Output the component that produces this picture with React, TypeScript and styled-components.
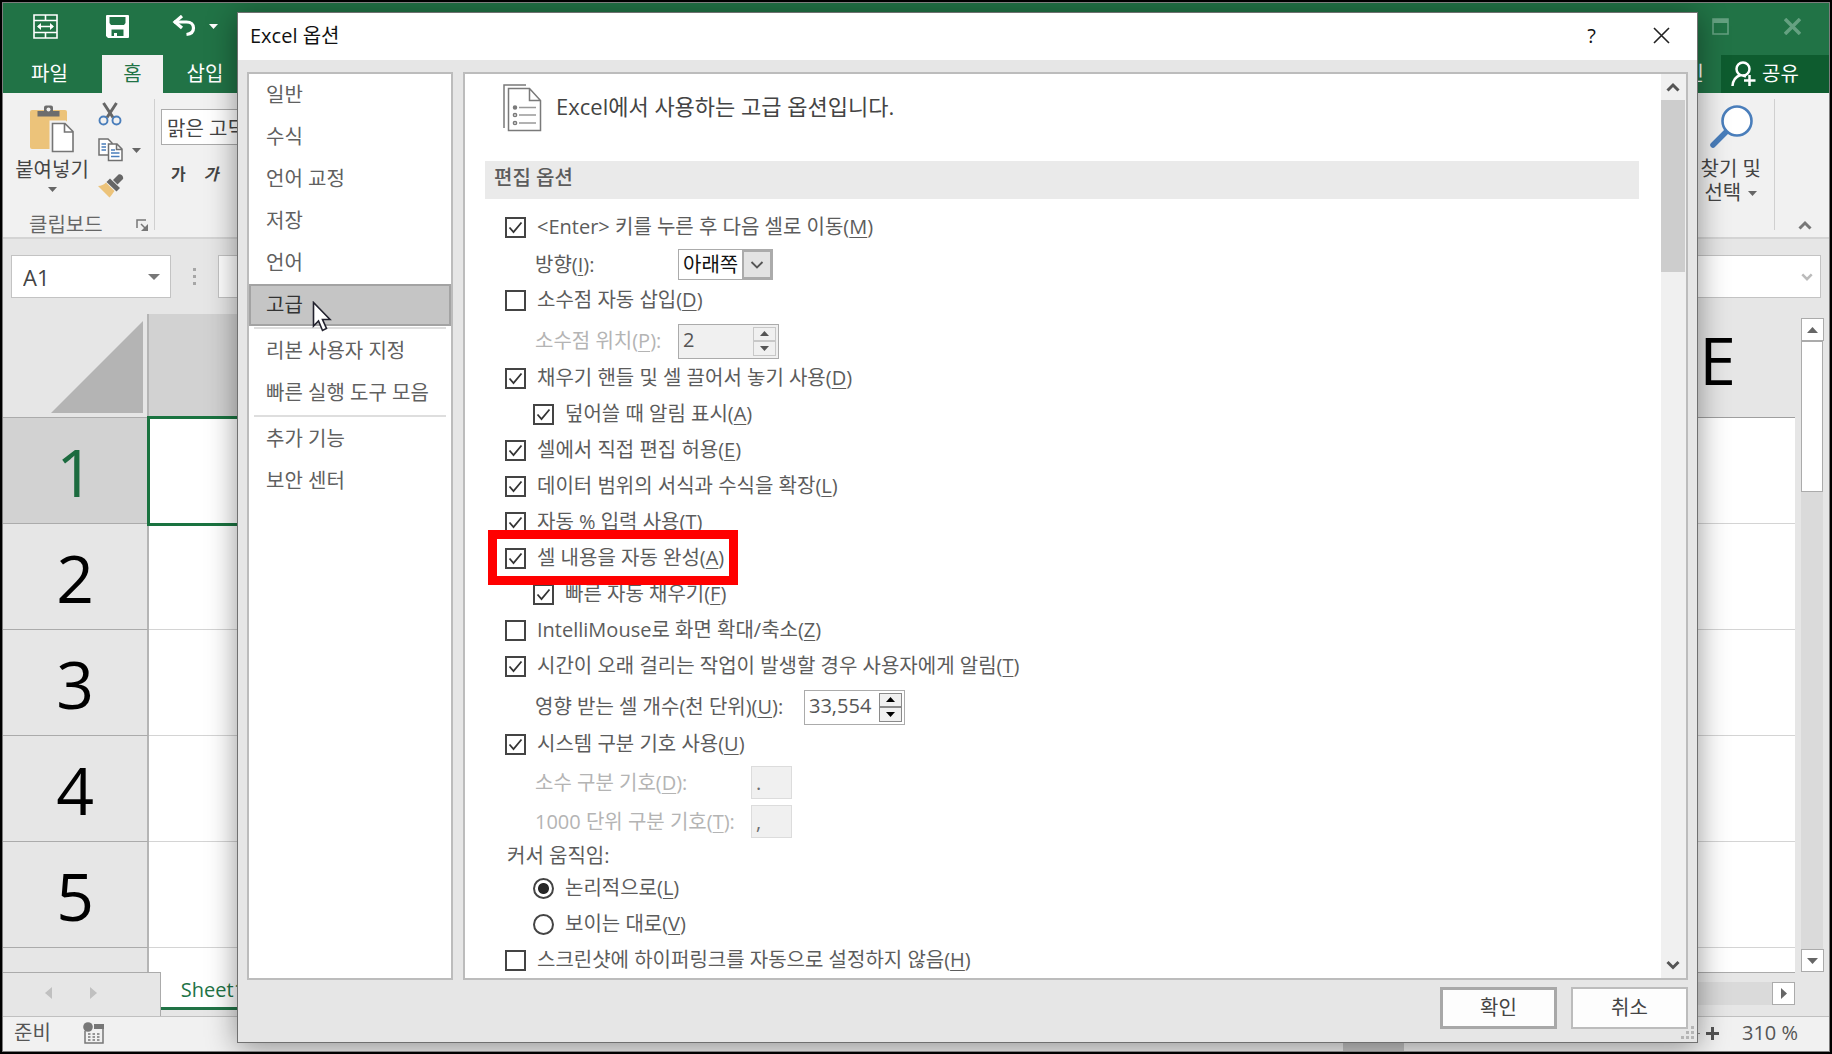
import React, { useState } from "react";
import styled, { createGlobalStyle, css } from "styled-components";

const GlobalStyle = createGlobalStyle`
  *, *::before, *::after { box-sizing: border-box; }
  html, body { margin: 0; }
  body, button, input, select {
    font-family: "Open Sans", "Noto Sans CJK KR", sans-serif;
    font-size: 20px;
    line-height: 24px;
  }
  button { padding: 0; border: 0; background: none; color: inherit; }
  svg { display: block; flex: none; }
`;

/* ---------- workbook window ---------- */

const Frame = styled.div`
  height: 100vh;
  min-height: 1000px;
  border: 2px solid #000;
  overflow: hidden;
`;

const Workbook = styled.div`
  position: relative;
  display: flex;
  flex-direction: column;
  height: 100%;
  border: 1px solid #7d7d7d;
  background: #e6e6e6;
  overflow: hidden;
`;

const TitleBar = styled.header`
  display: flex;
  align-items: center;
  flex: none;
  height: 52px;
  padding: 0 28px 6px 30px;
  background: #217346;
  color: #fff;
`;

const QuickTools = styled.div`
  display: flex;
  align-items: center;
  flex: 1;
`;

const IconButton = styled.button<{ $gap?: number }>`
  display: flex;
  align-items: center;
  justify-content: center;
  margin-right: ${(p) => p.$gap ?? 0}px;
`;

const TabStrip = styled.nav`
  display: flex;
  flex: none;
  height: 38px;
  background: #217346;
  color: #fff;
`;

const RibbonTab = styled.button<{ $width: number; $active?: boolean }>`
  width: ${(p) => p.$width}px;
  background: ${(p) => (p.$active ? "#f1f1f1" : "transparent")};
  color: ${(p) => (p.$active ? "#217346" : "#fff")};
`;

const FileTab = styled(RibbonTab)`
  padding-right: 6px;
`;

const SignIn = styled.button`
  margin-left: auto;
  margin-right: 17px;
`;

const Share = styled.button`
  display: flex;
  align-items: center;
  gap: 6px;
  width: 108px;
  padding-left: 10px;
  background: #0e5c2f;
`;

const Ribbon = styled.section`
  display: flex;
  flex: none;
  height: 146px;
  border-bottom: 2px solid #d4d4d4;
  background: #f1f1f1;
  color: #444;
`;

const ClipboardGroup = styled.div`
  display: grid;
  grid-template-columns: 84px 1fr;
  grid-template-rows: 107px 1fr;
  width: 152px;
  margin: 6px 0 7px;
  border-right: 1px solid #d0d0d0;
`;

const PasteButton = styled.button`
  display: flex;
  flex-direction: column;
  align-items: center;
  gap: 5px;
  padding: 6px 0 0 14px;
  white-space: nowrap;
`;

const ClipTools = styled.div`
  display: flex;
  flex-direction: column;
  gap: 12px;
  padding: 3px 0 0 11px;
`;

const ClipTool = styled.button`
  display: flex;
  align-items: center;
  gap: 9px;
`;

const GroupLabel = styled.div`
  display: flex;
  align-items: center;
  justify-content: space-between;
  grid-column: 1 / 3;
  padding: 7px 6px 0 26px;
  color: #666;
`;

const FontGroup = styled.div`
  width: 200px;
  padding: 16px 0 0 6px;
`;

const FontName = styled.input`
  display: block;
  width: 190px;
  height: 36px;
  padding: 0 5px;
  border: 1px solid #ababab;
  background: #fff;
  color: #444;
`;

const StyleButtons = styled.div`
  display: flex;
  gap: 18px;
  padding: 17px 0 0 10px;
`;

const StyleButton = styled.button<{ $italic?: boolean }>`
  font-size: 16px;
  font-weight: 700;
  font-style: ${(p) => (p.$italic ? "italic" : "normal")};
`;

const FindGroup = styled.div`
  margin: 6px 0 7px auto;
  padding-right: 13px;
  border-right: 1px solid #d0d0d0;
`;

const FindButton = styled.button`
  display: flex;
  flex-direction: column;
  align-items: center;
  padding-top: 6px;
  gap: 8px;
`;

const CaretLine = styled.span`
  display: flex;
  align-items: center;
  justify-content: center;
  gap: 7px;
`;

const CollapseArea = styled.div`
  display: flex;
  align-items: flex-end;
  justify-content: center;
  width: 54px;
  padding: 0 0 7px 6px;
`;

const FormulaBar = styled.div`
  display: flex;
  align-items: flex-start;
  flex: none;
  height: 75px;
  padding: 16px 8px 0;
`;

const NameBox = styled.label`
  display: flex;
  align-items: center;
  width: 160px;
  height: 43px;
  padding-right: 10px;
  border: 1px solid #c3c3c3;
  background: #fff;
`;

const NameInput = styled.input`
  flex: 1;
  min-width: 0;
  padding: 0 0 0 11px;
  border: 0;
  background: none;
  color: #444;
  font-size: 22px;
`;

const Dots = styled.div`
  display: flex;
  flex-direction: column;
  align-items: center;
  justify-content: center;
  gap: 4px;
  width: 47px;
  height: 43px;
`;

const Dot = styled.i`
  width: 3px;
  height: 3px;
  background: #a6a6a6;
`;

const FormulaBox = styled.div`
  display: flex;
  align-items: center;
  justify-content: flex-end;
  flex: 1;
  height: 43px;
  padding-right: 7px;
  border: 1px solid #c3c3c3;
  background: #fff;
`;

const SheetArea = styled.div`
  display: flex;
  flex: 1;
  min-height: 0;
`;

const SheetPane = styled.div`
  flex: 1;
  min-width: 0;
  overflow: hidden;
`;

const Sheet = styled.table`
  width: 100%;
  table-layout: fixed;
  border-collapse: separate;
  border-spacing: 0;
  font-size: 66px;
  line-height: 72px;
  color: #000;
`;

const Corner = styled.th`
  width: 146px;
  height: 104px;
  padding: 7px 4px 0 0;
  border-right: 2px solid #b5b5b5;
  border-bottom: 1px solid #ababab;
  vertical-align: top;
  svg { margin-left: auto; }
`;

const ColumnHead = styled.th<{ $selected?: boolean }>`
  width: 349px;
  padding: 0 0 14px;
  border-bottom: 1px solid #9f9f9f;
  background: ${(p) => (p.$selected ? "#d2d2d2" : "transparent")};
  font-weight: 400;
  text-align: left;
`;

const ColumnLetter = styled.span`
  display: block;
  width: 345px;
  text-align: center;
`;

const RowHead = styled.th<{ $selected?: boolean }>`
  height: 106px;
  padding: 0;
  border-right: 2px solid #b5b5b5;
  border-bottom: 1px solid #ababab;
  background: ${(p) => (p.$selected ? "#d2d2d2" : "transparent")};
  color: ${(p) => (p.$selected ? "#1c6b3f" : "#000")};
  font-weight: 400;
`;

const Cell = styled.td<{ $selected?: boolean }>`
  border-bottom: 1px solid #d4d4d4;
  background: #fff;
  ${(p) => p.$selected && css`outline: 3px solid #1a7340; outline-offset: -1px;`}
  &:last-child { border-right: 2px solid #ababab; }
`;

const VScroll = styled.div`
  display: flex;
  flex-direction: column;
  flex: none;
  width: 34px;
  padding: 4px 6px 0;
`;

const ScrollButton = styled.button`
  display: flex;
  align-items: center;
  justify-content: center;
  flex: none;
  width: 23px;
  height: 23px;
  border: 1px solid #ababab;
  background: #fff;
`;

const VTrack = styled.div`
  flex: 1;
  background: #dadada;
`;

const VThumb = styled.div`
  height: 151px;
  border: 1px solid #ababab;
  background: #fff;
`;

const SheetTabs = styled.div`
  display: flex;
  flex: none;
  height: 44px;
  margin-right: 34px;
`;

const TabArrows = styled.div`
  display: flex;
  align-items: center;
  gap: 38px;
  width: 158px;
  padding: 0 0 4px 42px;
  border-top: 1px solid #ababab;
  border-right: 1px solid #ababab;
`;

const SheetTab = styled.button`
  width: 104px;
  height: 38px;
  border-bottom: 3px solid #217346;
  background: #fff;
  color: #217346;
`;

const HScroll = styled.div`
  display: flex;
  flex: 1;
  padding-top: 9px;
  border-top: 1px solid #ababab;
`;

const HTrack = styled.div`
  flex: 1;
  height: 23px;
  background: #dadada;
`;

const StatusBar = styled.footer`
  display: flex;
  align-items: center;
  flex: none;
  height: 35px;
  padding: 0 31px 2px 11px;
  border-top: 1px solid #c0c0c0;
  background: #f1f1f1;
  color: #555;
`;

const StatusIcon = styled.span`
  margin-left: 32px;
`;

const ActiveView = styled.span`
  align-self: stretch;
  width: 61px;
  margin: 0 0 -2px auto;
  background: #c6c6c6;
`;

const ZoomLine = styled.span`
  width: 278px;
  height: 1px;
  margin: 0 6px 0 18px;
  background: #8a8a8a;
`;

const ZoomValue = styled.span`
  margin-left: 23px;
`;

/* ---------- options dialog ---------- */

const Dialog = styled.section`
  position: absolute;
  inset: 9px 131px 8px 234px;
  display: flex;
  flex-direction: column;
  border: 1px solid #707070;
  background: #e6e6e6;
  box-shadow: 0 4px 28px rgba(0, 0, 0, 0.42);
`;

const DialogTitle = styled.header`
  display: flex;
  align-items: center;
  flex: none;
  height: 47px;
  padding: 0 27px 2px 12px;
  background: #fff;
  color: #111;
`;

const DialogName = styled.h1`
  flex: 1;
  margin: 0;
  font-size: 20px;
  font-weight: 400;
`;

const DialogBody = styled.div`
  display: flex;
  flex: 1;
  min-height: 0;
  gap: 10px;
  padding: 12px 9px 0;
`;

const Categories = styled.nav`
  flex: none;
  width: 206px;
  border: 2px solid #bcbcbc;
  background: #fff;
`;

const Category = styled.button<{ $selected?: boolean }>`
  display: block;
  width: 100%;
  height: 42px;
  padding: 0 0 0 17px;
  background: ${(p) => (p.$selected ? "#c5c5c5" : "transparent")};
  box-shadow: ${(p) => (p.$selected ? "inset 0 0 0 2px #a3a3a3" : "none")};
  color: ${(p) => (p.$selected ? "#333" : "#606060")};
  text-align: left;
  white-space: nowrap;
`;

const Divider = styled.hr`
  height: 2px;
  margin: 1px 5px;
  border: 0;
  background: #dedede;
`;

const Page = styled.div`
  display: flex;
  flex: 1;
  min-width: 0;
  border: 2px solid #bcbcbc;
  background: #fff;
`;

const PageContent = styled.div`
  flex: 1;
  min-width: 0;
  padding: 0 22px 0 20px;
  overflow: hidden;
  color: #5c5c5c;
`;

const Intro = styled.div`
  display: flex;
  align-items: center;
  gap: 14px;
  height: 67px;
  margin-bottom: 20px;
  padding-left: 18px;
  color: #444;
  font-size: 22px;
`;

const IntroText = styled.span`
  padding-bottom: 4px;
`;

const SectionTitle = styled.h2`
  height: 38px;
  margin: 0 0 10px;
  padding-left: 9px;
  background: #eaeaea;
  font-size: 20px;
  font-weight: 500;
  line-height: 34px;
`;

const Options = styled.div`
  padding-left: 20px;
`;

const OptionLine = styled.div<{ $indent?: boolean }>`
  position: relative;
  display: flex;
  align-items: center;
  height: 36px;
  padding-left: ${(p) => (p.$indent ? 28 : 0)}px;
`;

const OptionLabel = styled.label`
  display: flex;
  align-items: center;
  gap: 11px;
  white-space: nowrap;
`;

const Tick = styled.input`
  appearance: none;
  flex: none;
  width: 21px;
  height: 21px;
  margin: 0;
  border: 2px solid #444;
  background: #fff;
  &[type="radio"] { border-radius: 50%; }
  &[type="checkbox"]:checked {
    background: url("data:image/svg+xml,%3Csvg xmlns='http://www.w3.org/2000/svg' viewBox='0 0 17 17'%3E%3Cpath d='M2.5 8.5l4 4.5 8-9.500' fill='none' stroke='%23333' stroke-width='1.8'/%3E%3C/svg%3E") center / 17px 17px;
  }
  &[type="radio"]:checked {
    background: radial-gradient(circle, #262626 5px, #fff 6px);
  }
`;

const Mnemonic = styled.u`
  text-decoration-thickness: 1px;
  text-underline-offset: 3px;
`;

const FieldLine = styled.div<{ $height: number; $top?: number }>`
  display: flex;
  align-items: center;
  height: ${(p) => p.$height}px;
  padding: ${(p) => p.$top ?? 0}px 0 0 30px;
`;

const FieldLabel = styled.label<{ $width: number; $disabled?: boolean }>`
  width: ${(p) => p.$width}px;
  color: ${(p) => (p.$disabled ? "#b4b4b4" : "inherit")};
  white-space: nowrap;
`;

const SelectBox = styled.div`
  display: grid;
  width: 95px;
  height: 31px;
  border: 1px solid #ababab;
`;

const Select = styled.select`
  appearance: none;
  grid-area: 1 / 1;
  padding: 0 0 0 4px;
  border: 0;
  background: #fff;
  color: #111;
`;

const SelectArrow = styled.span`
  display: flex;
  align-items: center;
  justify-content: center;
  grid-area: 1 / 1;
  justify-self: end;
  width: 30px;
  border: 2px solid #ababab;
  background: #e3e3e3;
  pointer-events: none;
`;

const Spinner = styled.div<{ $disabled?: boolean }>`
  display: flex;
  width: 101px;
  height: 35px;
  padding: 2px;
  border: 1px solid #ababab;
  background: ${(p) => (p.$disabled ? "#f0f0f0" : "#fff")};
  color: ${(p) => (p.$disabled ? "#c8c8c8" : "#8a8a8a")};
`;

const SpinnerInput = styled.input`
  flex: 1;
  min-width: 0;
  padding: 0 0 3px 2px;
  border: 0;
  background: none;
  color: #555;
`;

const SpinnerButtons = styled.div`
  display: grid;
  grid-template-rows: 1fr 1fr;
  width: 23px;
`;

const SpinnerButton = styled.button`
  display: flex;
  align-items: center;
  justify-content: center;
  border: 1px solid currentColor;
  background: #f0f0f0;
`;

const SmallInput = styled.input`
  width: 41px;
  height: 33px;
  padding: 0 4px;
  border: 1px solid #dcdcdc;
  background: #f0f0f0;
  color: #6d6d6d;
`;

const Caption = styled.div`
  height: 30px;
  padding-left: 2px;
  line-height: 32px;
`;

const Highlight = styled.span`
  position: absolute;
  left: -17px;
  top: -10px;
  width: 250px;
  height: 55px;
  border: 9px solid #f00;
  z-index: 1;
  pointer-events: none;
`;

const PageScroll = styled.div`
  display: flex;
  flex-direction: column;
  flex: none;
  width: 25px;
  padding-right: 1px;
  background: #f0f0f0;
`;

const PageScrollButton = styled.button`
  display: flex;
  align-items: center;
  justify-content: center;
  height: 26px;
`;

const PageTrack = styled.div`
  flex: 1;
`;

const PageThumb = styled.div`
  height: 172px;
  background: #cdcdcd;
`;

const DialogFooter = styled.footer`
  display: flex;
  flex: none;
  justify-content: flex-end;
  gap: 14px;
  height: 62px;
  padding: 7px 9px 13px;
`;

const DialogButton = styled.button<{ $primary?: boolean }>`
  width: 117px;
  border: ${(p) => (p.$primary ? "3px solid #a8a8a8" : "2px solid #bcbcbc")};
  background: #fdfdfd;
  color: #444;
`;

const Grip = styled.div`
  position: absolute;
  right: 3px;
  bottom: 3px;
`;

const Pointer = styled.div`
  position: absolute;
  left: 74px;
  top: 288px;
  pointer-events: none;
`;

/* ---------- drawings ---------- */

const Triangle = ({ dir, w = 11, h = 6, color = "#666" }: { dir: "up" | "down" | "left" | "right"; w?: number; h?: number; color?: string }) => {
  const shape = {
    up: `0,${h} ${w},${h} ${w / 2},0`,
    down: `0,0 ${w},0 ${w / 2},${h}`,
    left: `${w},0 ${w},${h} 0,${h / 2}`,
    right: `0,0 ${w},${h / 2} 0,${h}`,
  }[dir];
  return (
    <svg width={w} height={h}>
      <polygon points={shape} fill={color} />
    </svg>
  );
};

const Chevron = ({ dir, color = "#555", w = 14, thick = 3 }: { dir: "up" | "down"; color?: string; w?: number; thick?: number }) => (
  <svg width={w} height={10} viewBox="0 0 14 10" fill="none" stroke={color} strokeWidth={thick}>
    <path d={dir === "up" ? "M1.500 8.500L7 3l5.500 5.500" : "M1.500 2L7 7.500 12.500 2"} />
  </svg>
);

const MergeIcon = () => (
  <svg width="25" height="25" viewBox="0 0 25 25" fill="none" stroke="#fff" strokeWidth="1.600">
    <path d="M1 1h23v23H1zM1 6.500h23M1 18.500h23M12.500 1v5.500M12.500 18.500V24M5 12.500h15" />
    <path d="M8 9l-4 3.500L8 16zM17 9l4 3.500-4 3.500z" fill="#fff" stroke="none" />
  </svg>
);

const SaveIcon = () => (
  <svg width="23" height="23" viewBox="0 0 23 23">
    <path fill="#fff" fillRule="evenodd" d="M1 0h21a1 1 0 011 1v21a1 1 0 01-1 1H2l-2-2V1a1 1 0 011-1zM3.500 2v6l1.500 2h13l1.500-2V2zM5.500 14.500V21H8v-3h3v3h6.500v-6.500z" />
  </svg>
);

const UndoIcon = () => (
  <svg width="24" height="22" viewBox="0 0 24 22" fill="none" stroke="#fff" strokeWidth="3.200">
    <path d="M2 7h12.500c4.500 0 7 2.500 7 6s-2.500 6-7 6.500" />
    <path d="M10 1L3 7l7 6" />
  </svg>
);

const PasteIcon = () => (
  <svg width="46" height="48" viewBox="0 0 46 48">
    <rect x="1" y="5" width="37" height="39" rx="2" fill="#ecc37a" />
    <path d="M8.500 6H15V2.500a2 2 0 012-2h5a2 2 0 012 2V6h6.500v5.500h-22z" fill="#6d6d6d" />
    <circle cx="19.500" cy="4.500" r="2" fill="#f1f1f1" />
    <path d="M22.500 17.500H36l8 8v21H22.500z" fill="#fff" stroke="#f1f1f1" strokeWidth="4" />
    <path d="M23.500 18.500H36l8 8v20H23.500zM35.500 18.500v8.500H44" fill="#fff" stroke="#757575" strokeWidth="1.600" />
  </svg>
);

const CutIcon = () => (
  <svg width="24" height="24" viewBox="0 0 24 24" fill="none">
    <path d="M5.500 1L15 15.500M18.500 1L9 15.500" stroke="#666" strokeWidth="3" />
    <circle cx="5.500" cy="18.500" r="4" stroke="#4a7ebb" strokeWidth="1.900" />
    <circle cx="18.500" cy="18.500" r="4" stroke="#4a7ebb" strokeWidth="1.900" />
  </svg>
);

const CopyIcon = () => (
  <svg width="25" height="24" viewBox="0 0 25 24" fill="#fff" stroke="#707070" strokeWidth="1.500">
    <path d="M1 1h9l4 4v12H1z" />
    <path d="M3.500 6H8M3.500 9H8M3.500 12H8" stroke="#4a7ebb" />
    <path d="M10.500 6H19l5 5v11.500H10.500zM18.500 6v5.500H24" />
    <path d="M13 12h4M13 15h8.500M13 18.500h8.500" stroke="#4a7ebb" />
  </svg>
);

const BrushIcon = () => (
  <svg width="26" height="24" viewBox="0 0 26 24">
    <path d="M0 12c3 0 6-1.500 8-3.500l8.500 8.500c-1.500 2-3 4.500-5 6.500z" fill="#ecc37a" />
    <path d="M8.500 8l3.500-3.500 10 9.500-3.500 3.500z" fill="#666" />
    <path d="M15 6l5.500-5.500c2-1 5.500 1.500 4.500 4.500L19.500 10.500z" fill="#666" />
  </svg>
);

const LauncherIcon = () => (
  <svg width="12" height="12" viewBox="0 0 12 12" fill="none" stroke="#777" strokeWidth="1.500">
    <path d="M1 9V1h9M5 5l4 4" />
    <path d="M12 5v7H5z" fill="#777" stroke="none" />
  </svg>
);

const PersonIcon = () => (
  <svg width="25" height="26" viewBox="0 0 25 26" fill="none" stroke="#fff" strokeWidth="2.500">
    <circle cx="12" cy="8" r="6.500" />
    <path d="M1.500 25c.5-6 3.500-9.500 8-11M12 14.500l3 1M18.500 14v11M13 19.500h11.500" />
  </svg>
);

const FindIcon = () => (
  <svg width="44" height="44" viewBox="0 0 44 44">
    <path d="M4 40l15-15" stroke="#4a7ebb" strokeWidth="5.500" strokeLinecap="round" />
    <circle cx="28" cy="16" r="14.500" fill="#fff" stroke="#4a7ebb" strokeWidth="2.600" />
  </svg>
);

const MacroIcon = () => (
  <svg width="22" height="22" viewBox="0 0 22 22">
    <path d="M2 9v12h18V5" fill="none" stroke="#777" strokeWidth="1.500" />
    <path d="M11 2h10v5H11z" fill="#777" />
    <circle cx="5" cy="5" r="4.800" fill="#777" />
    <path d="M5 12h13M5 15h13M5 18h13" stroke="#777" strokeWidth="1.600" strokeDasharray="2.500 2" />
  </svg>
);

const OptionsIcon = () => (
  <svg width="39" height="48" viewBox="0 0 39 48" fill="none" stroke="#7a7a7a" strokeWidth="1.500">
    <path d="M1 44V1h22" />
    <path d="M5.500 4.500h21l11 12v30h-32zM26.500 4.500v12h11" />
    <circle cx="12" cy="23.500" r="1.500" fill="#7a7a7a" />
    <circle cx="12" cy="31" r="1.600" />
    <circle cx="12" cy="39" r="1.600" />
    <path d="M16 23.500h17M16 31h17M16 39h17" stroke="#999" />
  </svg>
);

const CloseIcon = ({ color, thick }: { color: string; thick: number }) => (
  <svg width="17" height="17" viewBox="0 0 17 17" stroke={color} strokeWidth={thick}>
    <path d="M1 1l15 15M16 1L1 16" />
  </svg>
);

const MaximizeIcon = () => (
  <svg width="17" height="17" viewBox="0 0 17 17" fill="none" stroke="#65a181" strokeWidth="1.600">
    <path d="M1 1h15v15H1z" />
    <path d="M1 3h15" strokeWidth="4" />
  </svg>
);

/* ---------- pieces ---------- */

type CheckProps = { text: string; letter: string; on?: boolean; indent?: boolean; marked?: boolean };

const CheckOption = ({ text, letter, on, indent, marked }: CheckProps) => (
  <OptionLine $indent={indent}>
    <OptionLabel>
      <Tick type="checkbox" defaultChecked={on} />
      <span>
        {text}(<Mnemonic>{letter}</Mnemonic>)
      </span>
    </OptionLabel>
    {marked && <Highlight />}
  </OptionLine>
);

const NumberSpinner = ({ id, value, disabled }: { id: string; value: string; disabled?: boolean }) => (
  <Spinner $disabled={disabled}>
    <SpinnerInput id={id} defaultValue={value} disabled={disabled} />
    <SpinnerButtons>
      <SpinnerButton aria-label="▲" disabled={disabled}>
        <Triangle dir="up" w={9} h={5} color={disabled ? "#555" : "#000"} />
      </SpinnerButton>
      <SpinnerButton aria-label="▼" disabled={disabled}>
        <Triangle dir="down" w={9} h={5} color={disabled ? "#555" : "#000"} />
      </SpinnerButton>
    </SpinnerButtons>
  </Spinner>
);

const categoryGroups = [
  ["일반", "수식", "언어 교정", "저장", "언어", "고급"],
  ["리본 사용자 지정", "빠른 실행 도구 모음"],
  ["추가 기능", "보안 센터"],
];

const editingOptions: CheckProps[] = [
  { text: "채우기 핸들 및 셀 끌어서 놓기 사용", letter: "D", on: true },
  { text: "덮어쓸 때 알림 표시", letter: "A", on: true, indent: true },
  { text: "셀에서 직접 편집 허용", letter: "E", on: true },
  { text: "데이터 범위의 서식과 수식을 확장", letter: "L", on: true },
  { text: "자동 % 입력 사용", letter: "T", on: true },
  { text: "셀 내용을 자동 완성", letter: "A", on: true, marked: true },
  { text: "빠른 자동 채우기", letter: "F", on: true, indent: true },
  { text: "IntelliMouse로 화면 확대/축소", letter: "Z" },
  { text: "시간이 오래 걸리는 작업이 발생할 경우 사용자에게 알림", letter: "T", on: true },
];

const OptionsDialog = () => {
  const [category, setCategory] = useState("고급");
  return (
    <Dialog role="dialog" aria-labelledby="dialog-name">
      <DialogTitle>
        <DialogName id="dialog-name">Excel 옵션</DialogName>
        <IconButton $gap={57}>?</IconButton>
        <IconButton>
          <CloseIcon color="#222" thick={1.6} />
        </IconButton>
      </DialogTitle>
      <DialogBody>
        <Categories>
          {categoryGroups.map((group, index) => (
            <React.Fragment key={index}>
              {index > 0 && <Divider />}
              {group.map((name) => (
                <Category key={name} $selected={name === category} onClick={() => setCategory(name)}>
                  {name}
                </Category>
              ))}
            </React.Fragment>
          ))}
        </Categories>
        <Page>
          <PageContent>
            <Intro>
              <OptionsIcon />
              <IntroText>Excel에서 사용하는 고급 옵션입니다.</IntroText>
            </Intro>
            <SectionTitle>편집 옵션</SectionTitle>
            <Options>
              <CheckOption text="<Enter> 키를 누른 후 다음 셀로 이동" letter="M" on />
              <FieldLine $height={37} $top={2}>
                <FieldLabel htmlFor="direction" $width={143}>
                  방향(<Mnemonic>I</Mnemonic>):
                </FieldLabel>
                <SelectBox>
                  <Select id="direction">
                    <option>아래쪽</option>
                  </Select>
                  <SelectArrow>
                    <Chevron dir="down" w={14} thick={1.8} />
                  </SelectArrow>
                </SelectBox>
              </FieldLine>
              <CheckOption text="소수점 자동 삽입" letter="D" />
              <FieldLine $height={42} $top={4}>
                <FieldLabel htmlFor="places" $width={143} $disabled>
                  소수점 위치(<Mnemonic>P</Mnemonic>):
                </FieldLabel>
                <NumberSpinner id="places" value="2" disabled />
              </FieldLine>
              {editingOptions.map((option) => (
                <CheckOption key={option.text} {...option} />
              ))}
              <FieldLine $height={42} $top={4}>
                <FieldLabel htmlFor="cells" $width={269}>
                  영향 받는 셀 개수(천 단위)(<Mnemonic>U</Mnemonic>):
                </FieldLabel>
                <NumberSpinner id="cells" value="33,554" />
              </FieldLine>
              <CheckOption text="시스템 구분 기호 사용" letter="U" on />
              <FieldLine $height={39} $top={2}>
                <FieldLabel htmlFor="decimal" $width={216} $disabled>
                  소수 구분 기호(<Mnemonic>D</Mnemonic>):
                </FieldLabel>
                <SmallInput id="decimal" defaultValue="." disabled />
              </FieldLine>
              <FieldLine $height={39} $top={2}>
                <FieldLabel htmlFor="thousands" $width={216} $disabled>
                  1000 단위 구분 기호(<Mnemonic>T</Mnemonic>):
                </FieldLabel>
                <SmallInput id="thousands" defaultValue="," disabled />
              </FieldLine>
              <Caption>커서 움직임:</Caption>
              <OptionLine $indent>
                <OptionLabel>
                  <Tick type="radio" name="cursor" defaultChecked />
                  <span>논리적으로(<Mnemonic>L</Mnemonic>)</span>
                </OptionLabel>
              </OptionLine>
              <OptionLine $indent>
                <OptionLabel>
                  <Tick type="radio" name="cursor" />
                  <span>보이는 대로(<Mnemonic>V</Mnemonic>)</span>
                </OptionLabel>
              </OptionLine>
              <CheckOption text="스크린샷에 하이퍼링크를 자동으로 설정하지 않음" letter="H" />
            </Options>
          </PageContent>
          <PageScroll>
            <PageScrollButton>
              <Chevron dir="up" />
            </PageScrollButton>
            <PageTrack>
              <PageThumb />
            </PageTrack>
            <PageScrollButton>
              <Chevron dir="down" />
            </PageScrollButton>
          </PageScroll>
        </Page>
      </DialogBody>
      <DialogFooter>
        <DialogButton $primary>확인</DialogButton>
        <DialogButton>취소</DialogButton>
      </DialogFooter>
      <Grip>
        <svg width="13" height="13" fill="#b5b5b5">
          <path d="M10 0h3v3h-3zM5 5h3v3H5zM10 5h3v3h-3zM0 10h3v3H0zM5 10h3v3H5zM10 10h3v3h-3z" />
        </svg>
      </Grip>
      <Pointer>
        <svg width="20" height="31" viewBox="0 0 20 31">
          <path d="M1.500 1.500v23.500l5-5 4 9.500 4-2-4-9h7.500z" fill="#fff" stroke="#22222e" strokeWidth="1.600" />
        </svg>
      </Pointer>
    </Dialog>
  );
};

export default function App() {
  return (
    <Frame>
      <GlobalStyle />
      <Workbook>
        <TitleBar>
          <QuickTools>
            <IconButton $gap={48}><MergeIcon /></IconButton>
            <IconButton $gap={43}><SaveIcon /></IconButton>
            <IconButton $gap={13}><UndoIcon /></IconButton>
            <IconButton><Triangle dir="down" w={9} h={5} color="#fff" /></IconButton>
          </QuickTools>
          <IconButton $gap={55}><MaximizeIcon /></IconButton>
          <IconButton><CloseIcon color="#65a181" thick={3.5} /></IconButton>
        </TitleBar>
        <TabStrip>
          <FileTab $width={99}>파일</FileTab>
          <RibbonTab $width={61} $active>홈</RibbonTab>
          <RibbonTab $width={84}>삽입</RibbonTab>
          <SignIn>로그인</SignIn>
          <Share><PersonIcon />공유</Share>
        </TabStrip>
        <Ribbon>
          <ClipboardGroup>
            <PasteButton>
              <PasteIcon />
              붙여넣기
              <Triangle dir="down" w={9} h={5} />
            </PasteButton>
            <ClipTools>
              <ClipTool><CutIcon /></ClipTool>
              <ClipTool><CopyIcon /><Triangle dir="down" w={9} h={5} /></ClipTool>
              <ClipTool><BrushIcon /></ClipTool>
            </ClipTools>
            <GroupLabel>클립보드<LauncherIcon /></GroupLabel>
          </ClipboardGroup>
          <FontGroup>
            <FontName defaultValue="맑은 고딕" />
            <StyleButtons>
              <StyleButton>가</StyleButton>
              <StyleButton $italic>가</StyleButton>
            </StyleButtons>
          </FontGroup>
          <FindGroup>
            <FindButton>
              <FindIcon />
              <span>
                찾기 및
                <CaretLine>선택<Triangle dir="down" w={9} h={5} /></CaretLine>
              </span>
            </FindButton>
          </FindGroup>
          <CollapseArea>
            <IconButton><Chevron dir="up" color="#777" /></IconButton>
          </CollapseArea>
        </Ribbon>
        <FormulaBar>
          <NameBox>
            <NameInput defaultValue="A1" />
            <Triangle dir="down" w={12} h={6} color="#777" />
          </NameBox>
          <Dots><Dot /><Dot /><Dot /></Dots>
          <FormulaBox><Chevron dir="down" color="#bbb" w={12} /></FormulaBox>
        </FormulaBar>
        <SheetArea>
          <SheetPane>
            <Sheet>
              <thead>
                <tr>
                  <Corner>
                    <svg width="92" height="92"><polygon points="92,0 92,92 0,92" fill="#b4b4b4" /></svg>
                  </Corner>
                  <ColumnHead $selected />
                  <ColumnHead />
                  <ColumnHead />
                  <ColumnHead />
                  <ColumnHead><ColumnLetter>E</ColumnLetter></ColumnHead>
                </tr>
              </thead>
              <tbody>
                {["1", "2", "3", "4", "5", ""].map((row, index) => (
                  <tr key={index}>
                    <RowHead $selected={index === 0}>{row}</RowHead>
                    <Cell $selected={index === 0} />
                    <Cell />
                    <Cell />
                    <Cell />
                    <Cell />
                  </tr>
                ))}
              </tbody>
            </Sheet>
          </SheetPane>
          <VScroll>
            <ScrollButton><Triangle dir="up" /></ScrollButton>
            <VTrack><VThumb /></VTrack>
            <ScrollButton><Triangle dir="down" /></ScrollButton>
          </VScroll>
        </SheetArea>
        <SheetTabs>
          <TabArrows>
            <IconButton><Triangle dir="left" w={7} h={12} color="#c0c0c0" /></IconButton>
            <IconButton><Triangle dir="right" w={7} h={12} color="#c0c0c0" /></IconButton>
          </TabArrows>
          <SheetTab>Sheet1</SheetTab>
          <HScroll>
            <HTrack />
            <ScrollButton><Triangle dir="right" w={6} h={11} /></ScrollButton>
          </HScroll>
        </SheetTabs>
        <StatusBar>
          준비
          <StatusIcon><MacroIcon /></StatusIcon>
          <ActiveView />
          <ZoomLine />
          <svg width="13" height="13" stroke="#555" strokeWidth="3"><path d="M0 6.500h13M6.500 0v13" /></svg>
          <ZoomValue>310 %</ZoomValue>
        </StatusBar>
        <OptionsDialog />
      </Workbook>
    </Frame>
  );
}
